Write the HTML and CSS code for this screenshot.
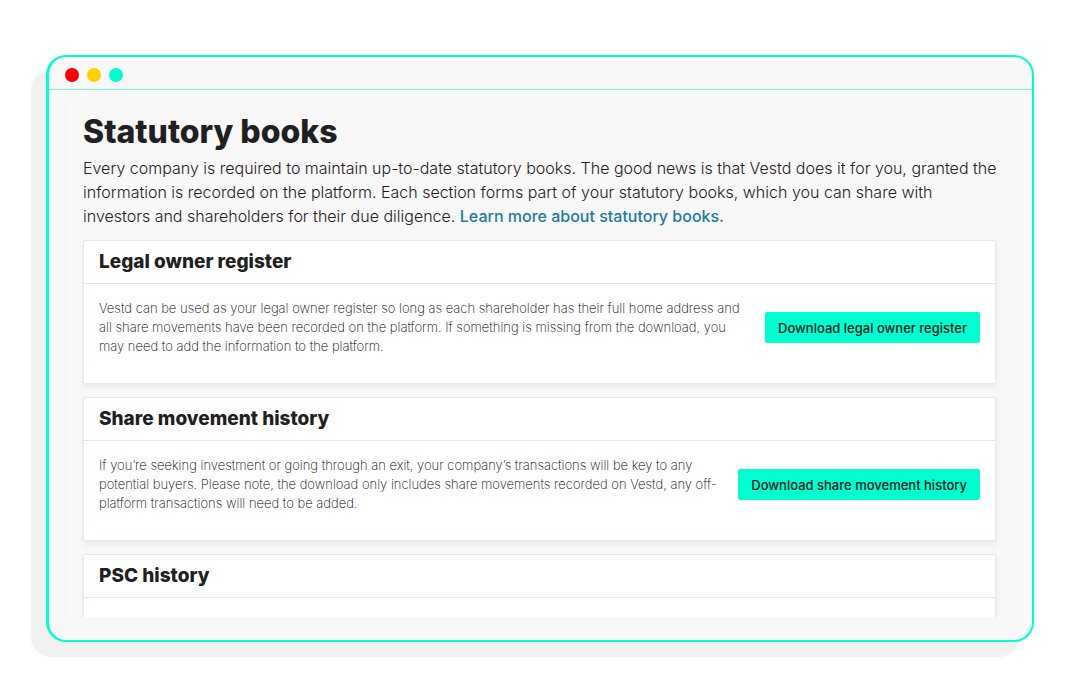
FILE: index.html
```html
<!DOCTYPE html>
<html lang="en">

<head>
  <meta charset="UTF-8">
  <meta name="viewport" content="width=device-width, initial-scale=1.0">
  <title>Statutory books</title>
  <link rel="stylesheet" href="styles.css">
</head>

<body>
  <div class="window">
    <div class="window-bar">
      <span class="dot red"></span>
      <span class="dot yellow"></span>
      <span class="dot green"></span>
    </div>
    <main class="content">
      <h1>Statutory books</h1>
      <p class="intro">Every company is required to maintain up-to-date statutory books. The good news is that Vestd does it for you, granted the<br>
        information is recorded on the platform. Each section forms part of your statutory books, which you can share with<br>
        investors and shareholders for their due diligence. <a href="#">Learn more about statutory books.</a></p>

      <section class="card">
        <h2>Legal owner register</h2>
        <div class="card-body">
          <p>Vestd can be used as your legal owner register so long as each shareholder has their full home address and<br>
            all share movements have been recorded on the platform. If something is missing from the download, you<br>
            may need to add the information to the platform.</p>
          <button type="button">Download legal owner register</button>
        </div>
      </section>

      <section class="card">
        <h2>Share movement history</h2>
        <div class="card-body">
          <p>If you’re seeking investment or going through an exit, your company’s transactions will be key to any<br>
            potential buyers. Please note, the download only includes share movements recorded on Vestd, any off-<br>
            platform transactions will need to be added.</p>
          <button type="button">Download share movement history</button>
        </div>
      </section>

      <section class="card">
        <h2>PSC history</h2>
        <div class="card-body"></div>
      </section>
    </main>
  </div>
</body>

</html>
```
FILE: styles.css
```css
* {
  box-sizing: border-box;
}

body {
  display: flex;
  margin: 0;
  padding: 55px 46px;
  height: 100vh;
  background-color: #fff;
  color: #1f2020;
  font-family: Inter, "Liberation Sans", sans-serif;
}

h1,
h2,
p {
  margin: 0;
}

.window {
  flex: 1;
  display: flex;
  flex-direction: column;
  padding-bottom: 23px;
  min-width: 0;
  background-color: #f8f8f8;
  border: 2px solid #00ffd0;
  border-left-width: 3px;
  border-radius: 20px;
  box-shadow: -15px 15px 2px #f1f1f1;
}

.window-bar {
  flex: none;
  display: flex;
  align-items: center;
  gap: 8px;
  padding: 3px 16px 0;
  height: 33px;
  border-bottom: 1px solid #6df5da;
}

.dot {
  width: 14px;
  height: 14px;
  border-radius: 50%;
}

.red {
  background-color: #ff0000;
}

.yellow {
  background-color: #ffcf00;
}

.green {
  background-color: #00ffd0;
}

/* the page is cut off at the bottom of the window */
.content {
  flex: 1;
  margin: 15px 19px 0 14px;
  padding: 8px 17px 0;
  min-height: 0;
  border-left: 3px solid #f2f8f6;
  overflow: hidden;
}

h1 {
  font-size: 32px;
  font-weight: 800;
  line-height: 38px;
}

.intro {
  margin-top: 5px;
  font-size: 16px;
  font-weight: 300;
  line-height: 24px;
  white-space: nowrap;
}

.intro a {
  color: #1f7a9f;
  font-weight: 500;
  text-decoration: none;
}

.card {
  margin-top: 13px;
  background-color: #fff;
  border: 1px solid #e6e8e8;
  border-radius: 2px;
  box-shadow: 0 3px 6px rgba(30, 60, 55, 0.08);
}

.intro + .card {
  margin-top: 12px;
}

.card h2 {
  padding: 0 15px;
  border-bottom: 1px solid #e4e4e4;
  font-size: 19px;
  font-weight: 800;
  line-height: 42px;
}

.card-body {
  display: flex;
  justify-content: space-between;
  align-items: center;
  padding: 15px 15px 27px;
  min-height: 99px;
}

.card-body p {
  color: #000;
  font-size: 13px;
  font-weight: 200;
  line-height: 19px;
  white-space: nowrap;
}

.card-body button {
  padding: 0 13px;
  height: 31px;
  background-color: #00ffd0;
  border: none;
  border-radius: 2px;
  color: #06201b;
  font-family: inherit;
  font-size: 13px;
  font-weight: 500;
  cursor: pointer;
}
```
